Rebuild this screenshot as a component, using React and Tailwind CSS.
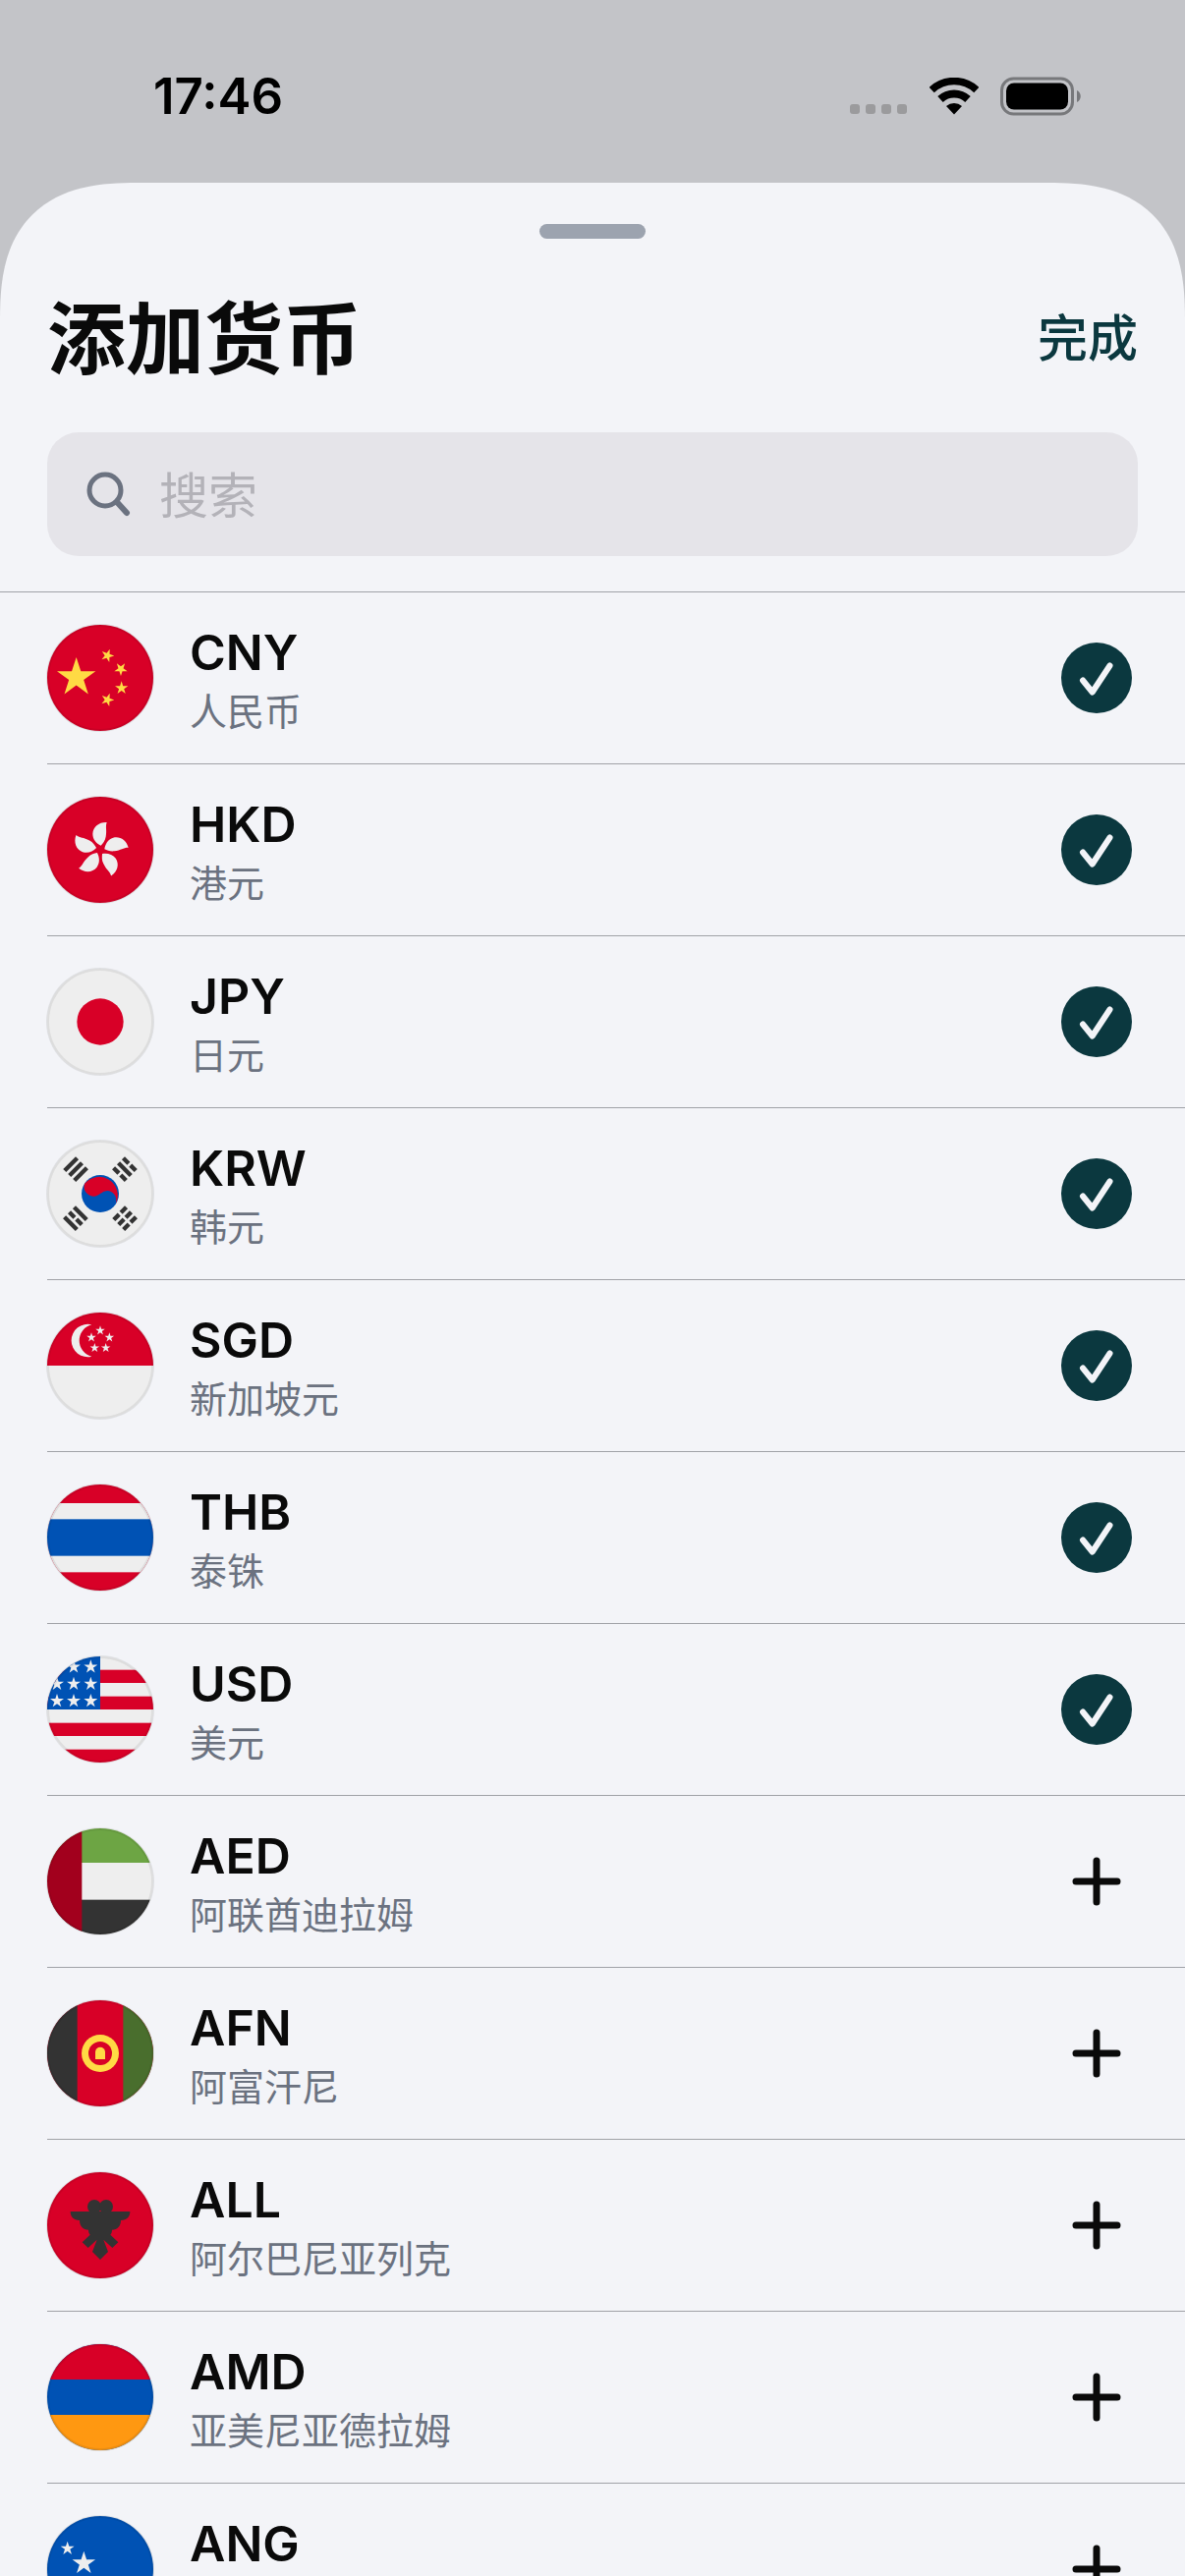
import React, { useState } from "react";
import clsx from "clsx";

const starPoints = (cx, cy, r, turn = 0) => {
  const points = [];
  for (let i = 0; i < 10; i++) {
    const radius = i % 2 === 0 ? r : r * 0.382;
    const angle = ((i * 36 - 90 + turn) * Math.PI) / 180;
    points.push(`${cx + radius * Math.cos(angle)},${cy + radius * Math.sin(angle)}`);
  }
  return points.join(" ");
};

const Star = ({ x, y, r, turn, fill = "#eee" }) => (
  <polygon points={starPoints(x, y, r, turn)} fill={fill} />
);

// Three bars, "1" is a solid bar and "0" a broken one
const Trigram = ({ x, y, turn, bars }) => (
  <g transform={`translate(${x} ${y}) rotate(${turn})`} fill="#333">
    {bars.split("").map((bar, i) =>
      bar === "1" ? (
        <rect key={i} x="-27" y={-27 + i * 21} width="54" height="13" />
      ) : (
        <g key={i}>
          <rect x="-27" y={-27 + i * 21} width="23" height="13" />
          <rect x="4" y={-27 + i * 21} width="23" height="13" />
        </g>
      )
    )}
  </g>
);

const flags = {
  CNY: (
    <>
      <rect width="324" height="324" fill="#d80027" />
      <Star x={89} y={161} r={62} fill="#ffda44" />
      <Star x={184} y={94} r={21} turn={20} fill="#ffda44" />
      <Star x={225} y={135} r={21} turn={36} fill="#ffda44" />
      <Star x={227} y={193} r={21} fill="#ffda44" />
      <Star x={184} y={229} r={21} turn={20} fill="#ffda44" />
    </>
  ),
  HKD: (
    <>
      <rect width="324" height="324" fill="#d80027" />
      {[0, 72, 144, 216, 288].map((turn) => (
        <path
          key={turn}
          transform={`rotate(${turn} 162 162)`}
          d="M164 149C150 142 139 130 139 113C140 92 158 77 182 78C177 92 183 102 179 122C177 134 170 142 164 149Z"
          fill="#eee"
        />
      ))}
    </>
  ),
  JPY: (
    <>
      <rect width="324" height="324" fill="#eee" />
      <circle cx="162" cy="162" r="71" fill="#d80027" />
    </>
  ),
  KRW: (
    <>
      <rect width="324" height="324" fill="#eee" />
      <circle cx="162" cy="162" r="57" fill="#0052b4" />
      <path
        d="M114 132A57 57 0 0 1 210 192C216 168 198 153 184 153C172 154 168 159 162 162C156 166 150 171 140 170C124 169 108 153 114 132Z"
        fill="#d80027"
      />
      <Trigram x={87} y={87} turn={-45} bars="111" />
      <Trigram x={237} y={87} turn={45} bars="010" />
      <Trigram x={87} y={237} turn={45} bars="101" />
      <Trigram x={237} y={237} turn={-45} bars="000" />
    </>
  ),
  SGD: (
    <>
      <rect width="324" height="324" fill="#eee" />
      <rect width="324" height="162" fill="#d80027" />
      <path d="M136 37A50 50 0 1 0 136 134A50 50 0 0 1 136 37Z" fill="#eee" />
      <Star x={162} y={55} r={15} />
      <Star x={135} y={76} r={15} />
      <Star x={190} y={76} r={15} />
      <Star x={145} y={108} r={15} />
      <Star x={179} y={108} r={15} />
    </>
  ),
  THB: (
    <>
      <rect width="324" height="324" fill="#d80027" />
      <rect y="57" width="324" height="211" fill="#eee" />
      <rect y="106" width="324" height="112" fill="#0052b4" />
    </>
  ),
  USD: (
    <>
      <rect width="324" height="324" fill="#eee" />
      {[41, 122, 203, 284].map((y) => (
        <rect key={y} y={y} width="324" height="40" fill="#d80027" />
      ))}
      <rect width="162" height="162" fill="#0052b4" />
      {[32, 84, 136].map((y) =>
        [30, 81, 133].map((x) => <Star key={`${x}-${y}`} x={x} y={y} r={22} />)
      )}
    </>
  ),
  AED: (
    <>
      <rect width="324" height="324" fill="#eee" />
      <rect width="324" height="105" fill="#6da544" />
      <rect y="218" width="324" height="106" fill="#333" />
      <rect width="106" height="324" fill="#a2001d" />
    </>
  ),
  AFN: (
    <>
      <rect width="324" height="324" fill="#d80027" />
      <rect width="92" height="324" fill="#333" />
      <rect x="232" width="92" height="324" fill="#496e2d" />
      <circle cx="162" cy="162" r="57" fill="#ffda44" />
      <circle cx="162" cy="162" r="36" fill="#d80027" />
      <path d="M147 180V158a15 15 0 0 1 30 0V180Z" fill="#ffda44" />
    </>
  ),
  ALL: (
    <>
      <rect width="324" height="324" fill="#d80027" />
      <g fill="#333">
        <circle cx="144" cy="105" r="21" />
        <circle cx="180" cy="105" r="21" />
        <path d="M71 120C71 136 81 147 99 147C99 165 110 176 126 176C126 182 128 188 131 191L107 214L125 231L152 206L138 243L162 267L186 243L172 206L199 231L217 214L193 191C196 188 198 182 198 176C214 176 225 165 225 147C243 147 253 136 253 120Z" />
      </g>
    </>
  ),
  AMD: (
    <>
      <rect width="324" height="324" fill="#0052b4" />
      <rect width="324" height="108" fill="#d80027" />
      <rect y="216" width="324" height="108" fill="#ff9811" />
    </>
  ),
  ANG: (
    <>
      <rect width="324" height="324" fill="#0052b4" />
      <rect y="211" width="324" height="43" fill="#ffda44" />
      <Star x={62} y={99} r={22} />
      <Star x={112} y={144} r={37} />
    </>
  ),
};

const currencies = [
  { code: "CNY", name: "人民币", added: true },
  { code: "HKD", name: "港元", added: true },
  { code: "JPY", name: "日元", added: true },
  { code: "KRW", name: "韩元", added: true },
  { code: "SGD", name: "新加坡元", added: true },
  { code: "THB", name: "泰铢", added: true },
  { code: "USD", name: "美元", added: true },
  { code: "AED", name: "阿联酋迪拉姆", added: false },
  { code: "AFN", name: "阿富汗尼", added: false },
  { code: "ALL", name: "阿尔巴尼亚列克", added: false },
  { code: "AMD", name: "亚美尼亚德拉姆", added: false },
  { code: "ANG", name: "荷属安的列斯盾", added: false },
];

const Flag = ({ code }) => (
  <svg viewBox="-6 -6 336 336" className="-m-0.5 size-28 shrink-0" aria-hidden="true">
    <clipPath id={`flag-${code}`}>
      <circle cx="162" cy="162" r="162" />
    </clipPath>
    <circle cx="162" cy="162" r="165" fill="#dfe0e3" />
    <g clipPath={`url(#flag-${code})`}>{flags[code]}</g>
    <circle cx="162" cy="162" r="159" fill="none" stroke="#000" strokeOpacity="0.07" strokeWidth="6" />
  </svg>
);

const StatusBar = () => (
  <div className="flex h-[186px] shrink-0 items-center justify-between pt-2.5 pr-[106px] pl-[156px]">
    <span className="text-[51px] leading-[60px] font-semibold text-black">17:46</span>
    <div className="flex items-center">
      <div className="mr-[23px] flex gap-1.5 pt-[26px]">
        {[0, 1, 2, 3].map((dot) => (
          <span key={dot} className="size-2.5 rounded-[3px] bg-[#9b9b9d]" />
        ))}
      </div>
      <svg viewBox="0 0 50 38" className="mr-[22px] h-[38px] w-[50px]" aria-hidden="true">
        <g fill="none" stroke="#000">
          <path d="M2.2 12.5A33.5 33.5 0 0 1 47.8 12.5" strokeWidth="7.5" />
          <path d="M11 22A20.5 20.5 0 0 1 39 22" strokeWidth="8" />
        </g>
        <path d="M25 37.5L17 29A12 12 0 0 1 33 29Z" />
      </svg>
      <svg viewBox="0 0 82 40" className="h-[40px] w-[82px]" aria-hidden="true">
        <rect x="1.5" y="2" width="72" height="36" rx="12" fill="none" stroke="#77787b" strokeWidth="3" />
        <rect x="6" y="6.5" width="63" height="27" rx="8" />
        <path d="M78 14C83 16 83 24 78 26Z" fill="#77787b" />
      </svg>
    </div>
  </div>
);

const CurrencyRow = ({ code, name, added, onToggle }) => (
  <li className="ml-12 flex h-[175px] items-center border-b border-[#a0a2a7] pr-[54px]">
    <Flag code={code} />
    <div className="ml-[37px] flex-1 pt-2">
      <p className="text-[50px] leading-[60px] font-semibold text-[#0a0a0a]">{code}</p>
      <p className="text-[38px] leading-[60px] text-[#6b7280]">{name}</p>
    </div>
    <button
      type="button"
      aria-label={`${added ? "移除" : "添加"} ${code}`}
      onClick={onToggle}
      className={clsx("size-[72px] rounded-full", added ? "bg-[#0b383f]" : "bg-transparent")}
    >
      <svg viewBox="0 0 72 72" className="size-full" fill="none" strokeLinecap="round" strokeLinejoin="round">
        {added ? (
          <path d="M22 38.5L31.7 50.5L49.5 23.5" stroke="#f3f4f8" strokeWidth="6" />
        ) : (
          <path d="M36 15V57M15 36H57" stroke="#0a0a0a" strokeWidth="7" />
        )}
      </svg>
    </button>
  </li>
);

const App = () => {
  const [list, setList] = useState(currencies);
  const [keyword, setKeyword] = useState("");

  const toggle = (code) => {
    setList(list.map((c) => (c.code === code ? { ...c, added: !c.added } : c)));
  };

  const shown = list.filter(
    (c) => c.code.includes(keyword.trim().toUpperCase()) || c.name.includes(keyword.trim())
  );

  return (
    <div className="flex h-screen flex-col overflow-hidden bg-[#c3c4c8] font-['Inter','Noto_Sans_CJK_SC',sans-serif]">
      <StatusBar />

      <main className="flex min-h-0 flex-1 flex-col overflow-hidden rounded-t-[116px] bg-[#f3f4f8] supports-[corner-shape:squircle]:rounded-t-[140px] supports-[corner-shape:squircle]:[corner-shape:superellipse(1.38)]">
        <div className="mx-auto mt-[42px] h-[15px] w-[108px] shrink-0 rounded-full bg-[#9ca3af]" />

        {/* HEADER */}
        <div className="mt-[42px] flex items-center justify-between px-12">
          <h1 className="text-[80px] leading-[120px] font-bold text-[#0a0a0a]">添加货币</h1>
          <button type="button" className="text-[51px] leading-[60px] font-medium text-[#0b383f]">
            完成
          </button>
        </div>

        {/* SEARCH */}
        <label className="mx-12 mt-[35px] flex h-[126px] shrink-0 items-center rounded-[32px] bg-[#e5e4e9] px-10">
          <svg viewBox="0 0 46 46" className="size-[46px] shrink-0 text-[#6b7280]" aria-hidden="true">
            <circle cx="19" cy="19" r="16" fill="none" stroke="currentColor" strokeWidth="5" />
            <path d="M31 31L41 42" stroke="currentColor" strokeWidth="6" strokeLinecap="round" />
          </svg>
          <input
            type="text"
            aria-label="搜索"
            placeholder="搜索"
            value={keyword}
            onChange={(e) => setKeyword(e.target.value)}
            className="ml-7 min-w-0 flex-1 bg-transparent pt-1 text-[50px] leading-[72px] text-[#0a0a0a] outline-none placeholder:text-[#b3b2b8]"
          />
        </label>

        {/* CURRENCY LIST */}
        <ul className="mt-9 min-h-0 flex-1 overflow-hidden border-t border-[#a0a2a7]">
          {shown.map((c) => (
            <CurrencyRow key={c.code} {...c} onToggle={() => toggle(c.code)} />
          ))}
        </ul>
      </main>
    </div>
  );
};

export default App;
